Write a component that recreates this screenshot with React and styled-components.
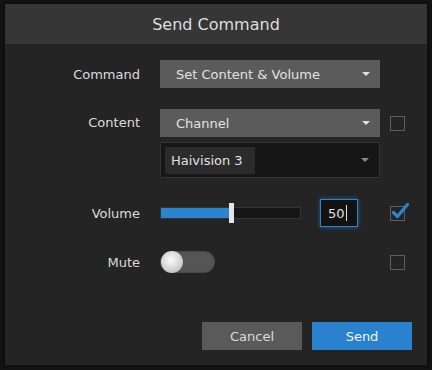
import React from "react";
import styled, { createGlobalStyle } from "styled-components";

const GlobalStyle = createGlobalStyle`
  html, body {
    margin: 0;
    padding: 0;
    background: #131313;
    font-family: "DejaVu Sans", Verdana, sans-serif;
  }
`;

const Page = styled.div`
  width: 432px;
  height: 370px;
  padding: 4px 5px 5px 5px;
  box-sizing: border-box;
`;

const Dialog = styled.div`
  width: 422px;
  height: 361px;
  background: #242424;
  display: flex;
  flex-direction: column;
  box-shadow: 0 0 3px rgba(0, 0, 0, 0.8);
`;

const Header = styled.div`
  height: 40px;
  background: #363636;
  color: #dedede;
  font-size: 16px;
  display: flex;
  align-items: center;
  justify-content: center;
`;

const Body = styled.div`
  flex: 1;
  padding-top: 16px;
  display: flex;
  flex-direction: column;
`;

const Row = styled.div`
  display: grid;
  grid-template-columns: 155px 220px 25px;
  align-items: center;
  min-height: ${(p) => p.h || 28}px;
  margin-bottom: ${(p) => p.mb || 0}px;
`;

const Label = styled.div`
  text-align: right;
  padding-right: 20px;
  font-size: 13px;
  color: #dcdcdc;
  align-self: ${(p) => p.top ? "start" : "center"};
  line-height: ${(p) => p.top ? "28px" : "normal"};
`;

const Stack = styled.div`
  display: flex;
  flex-direction: column;
  gap: 5px;
`;

const Select = styled.div`
  height: 28px;
  background: #5b5b5b;
  color: #e2e2e2;
  font-size: 13px;
  display: flex;
  align-items: center;
  justify-content: space-between;
  padding: 0 10px 0 16px;
`;

const Caret = styled.span`
  width: 0;
  height: 0;
  border-left: 4px solid transparent;
  border-right: 4px solid transparent;
  border-top: 4px solid ${(p) => p.dim ? "#8a8a8a" : "#e0e0e0"};
`;

const MultiSelect = styled.div`
  height: 36px;
  box-sizing: border-box;
  background: #161616;
  border: 1px solid #343434;
  display: flex;
  align-items: center;
  justify-content: space-between;
  padding: 0 10px 0 4px;
`;

const Chip = styled.div`
  height: 27px;
  width: 90px;
  box-sizing: border-box;
  background: #2b2b2b;
  color: #e2e2e2;
  font-size: 13px;
  display: flex;
  align-items: center;
  padding-left: 6px;
`;

const CheckCell = styled.div`
  padding-left: 10px;
  align-self: ${(p) => p.top ? "start" : "center"};
  padding-top: ${(p) => p.top ? 7 : 0}px;
`;

const Checkbox = styled.div`
  position: relative;
  width: 15px;
  height: 15px;
  box-sizing: border-box;
  border: 1px solid #5e5e5e;
`;

const Check = styled.svg`
  position: absolute;
  left: 1px;
  top: -4px;
`;

const VolumeControl = styled.div`
  display: flex;
  align-items: center;
  gap: 19px;
`;

const Track = styled.div`
  position: relative;
  width: 141px;
  height: 12px;
  box-sizing: border-box;
  background: #161616;
  border: 1px solid #333;
`;

const Fill = styled.div`
  height: 100%;
  background: #2a84d0;
`;

const Thumb = styled.div`
  position: absolute;
  top: -5px;
  width: 5px;
  height: 20px;
  margin-left: -2px;
  background: #e4e4e4;
`;

const NumberBox = styled.div`
  width: 38px;
  height: 28px;
  box-sizing: border-box;
  border: 1px solid #2a84d0;
  box-shadow: 0 0 4px rgba(42, 132, 208, 0.7);
  background: #121212;
  color: #e2e2e2;
  font-size: 13px;
  display: flex;
  align-items: center;
  padding-left: 7px;
`;

const Cursor = styled.span`
  width: 1px;
  height: 16px;
  background: #e2e2e2;
  margin-left: 1px;
`;

const Toggle = styled.div`
  position: relative;
  width: 55px;
  height: 22px;
  border-radius: 11px;
  background: #555;
  box-shadow: inset 0 0 2px rgba(0, 0, 0, 0.5);
`;

const Knob = styled.div`
  position: absolute;
  left: 1px;
  top: 0;
  width: 22px;
  height: 22px;
  border-radius: 50%;
  background: radial-gradient(circle at 45% 40%, #fafafa 0%, #d8d8d8 50%, #a9a9a9 100%);
`;

const Footer = styled.div`
  margin-top: auto;
  display: flex;
  justify-content: flex-end;
  gap: 10px;
  padding: 0 15px 15px 0;
`;

const Button = styled.button`
  width: 100px;
  height: 28px;
  border: 0;
  font-family: inherit;
  font-size: 13px;
  color: ${(p) => p.primary ? "#eef4fa" : "#dcdcdc"};
  background: ${(p) => p.primary ? "#2a82cf" : "#5a5a5a"};
`;

const volume = 50;

export default function App() {
  return (
    <>
      <GlobalStyle />
      <Page>
        <Dialog>
          <Header>Send Command</Header>
          <Body>
            <Row mb={21}>
              <Label>Command</Label>
              <Select>
                Set Content &amp; Volume
                <Caret />
              </Select>
            </Row>

            <Row mb={21}>
              <Label top>Content</Label>
              <Stack>
                <Select>
                  Channel
                  <Caret />
                </Select>
                <MultiSelect>
                  <Chip>Haivision 3</Chip>
                  <Caret dim />
                </MultiSelect>
              </Stack>
              <CheckCell top>
                <Checkbox />
              </CheckCell>
            </Row>

            <Row mb={24}>
              <Label>Volume</Label>
              <VolumeControl>
                <Track>
                  <Fill style={{ width: `${volume}%` }} />
                  <Thumb style={{ left: `${volume}%` }} />
                </Track>
                <NumberBox>
                  {volume}
                  <Cursor />
                </NumberBox>
              </VolumeControl>
              <CheckCell>
                <Checkbox>
                  <Check width="17" height="16" viewBox="0 0 17 16">
                    <path
                      d="M1.5 9.5 L5.5 13.5 L15.5 1.5"
                      fill="none"
                      stroke="#2a84d0"
                      strokeWidth="3.2"
                      strokeLinecap="round"
                      strokeLinejoin="round"
                    />
                  </Check>
                </Checkbox>
              </CheckCell>
            </Row>

            <Row h={22}>
              <Label>Mute</Label>
              <div>
                <Toggle>
                  <Knob />
                </Toggle>
              </div>
              <CheckCell>
                <Checkbox />
              </CheckCell>
            </Row>
          </Body>
          <Footer>
            <Button>Cancel</Button>
            <Button primary>Send</Button>
          </Footer>
        </Dialog>
      </Page>
    </>
  );
}
